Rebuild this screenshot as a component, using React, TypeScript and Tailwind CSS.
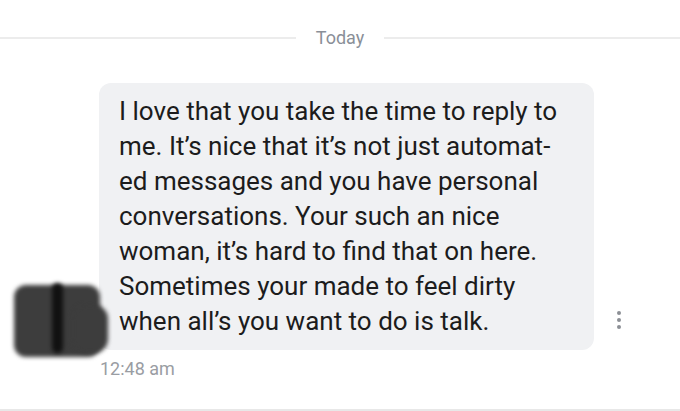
import React from 'react';

const lines = [
  'I love that you take the time to reply to',
  'me. It\u2019s nice that it\u2019s not just automat-',
  'ed messages and you have personal',
  'conversations. Your such an nice',
  'woman, it\u2019s hard to find that on here.',
  'Sometimes your made to feel dirty',
  'when all\u2019s you want to do is talk.',
];

const RedactedAvatar = () => (
  <div className="absolute left-[12px] top-[200px] w-[96px] h-[76px]">
    <div className="absolute left-[2px] top-[2px] w-[86px] h-[72px] rounded-[12px] bg-[#3d3d3d] blur-[2px]" />
    <div className="absolute left-[60px] top-[22px] w-[36px] h-[48px] rounded-[14px] bg-[#3d3d3d] blur-[2px]" />
    <div className="absolute left-[40px] top-[0px] w-[11px] h-[70px] rounded-full bg-[#111] blur-[2px]" />
  </div>
);

export default function App() {
  return (
    <div className="w-[680px] h-[411px] bg-white overflow-hidden" style={{ fontFamily: 'Roboto, "Noto Sans", sans-serif' }}>
      <div className="pt-[27px] flex items-center">
        <div className="w-[296px] h-[2px] bg-[#ececec]" />
        <span className="w-[88px] text-center text-[18px] leading-[22px] text-[#8a8f98]">Today</span>
        <div className="flex-1 h-[2px] bg-[#ececec]" />
      </div>

      <div className="relative mt-[34px] flex items-end">
        <div className="w-[99px] shrink-0" />
        <div className="w-[495px] rounded-[12px] bg-[#f0f1f3] pl-[20px] pt-[11px] pb-[11px] text-[26px] leading-[35px] text-[#1c1c1c]">
          {lines.map((l) => (
            <div key={l} className="whitespace-nowrap">{l}</div>
          ))}
        </div>
        <div className="ml-[23px] mb-[21px] flex flex-col gap-[3px]">
          <span className="w-[4px] h-[4px] rounded-full bg-[#8c8f95]" />
          <span className="w-[4px] h-[4px] rounded-full bg-[#8c8f95]" />
          <span className="w-[4px] h-[4px] rounded-full bg-[#8c8f95]" />
        </div>
        <RedactedAvatar />
      </div>

      <div className="pl-[100px] pt-[8px] text-[18px] leading-[22px] text-[#9a9da3]">12:48 am</div>

      <div className="mt-[29px] h-[2px] bg-[#e8e8e8]" />
    </div>
  );
}
